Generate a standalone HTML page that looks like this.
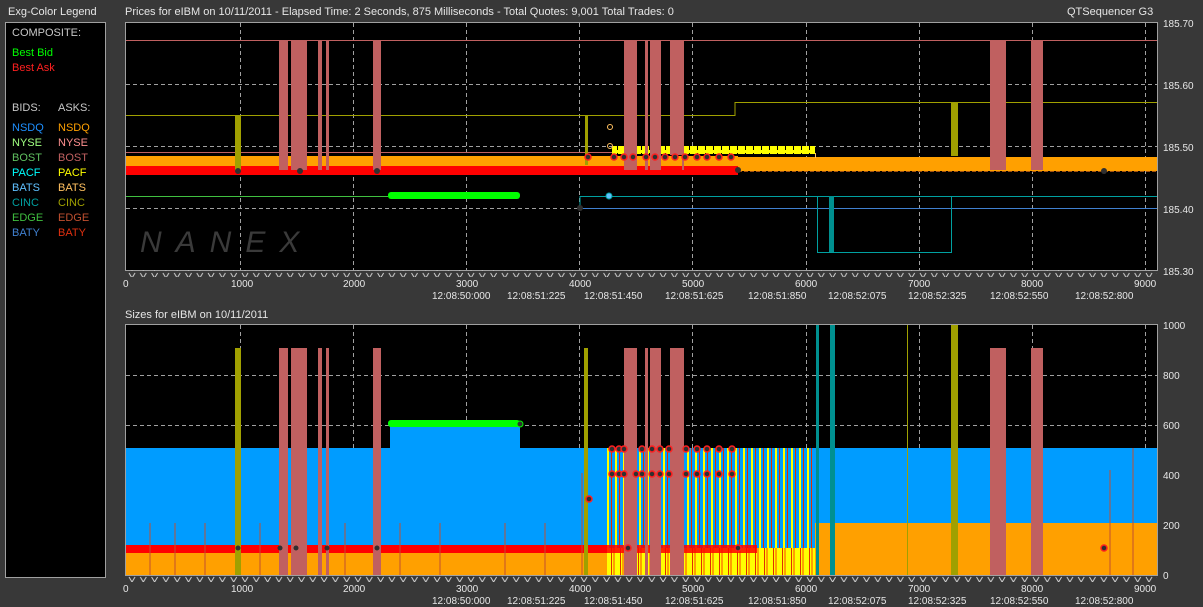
<!DOCTYPE html>
<html><head><meta charset="utf-8"><style>
html,body{margin:0;padding:0;background:#383838;}
svg{display:block;font-family:"Liberation Sans",sans-serif;}
</style></head><body>
<svg width="1203" height="607" viewBox="0 0 1203 607" xmlns="http://www.w3.org/2000/svg" xml:space="preserve">
<defs>
<pattern id="st" x="607" y="0" width="8" height="10" patternUnits="userSpaceOnUse">
<rect width="8" height="10" fill="#009cff"/><rect x="0" width="2" height="10" fill="#ffff00"/><rect x="4" width="1" height="10" fill="#e03000"/>
</pattern>
<pattern id="st2" x="607" y="0" width="9" height="10" patternUnits="userSpaceOnUse">
<rect width="9" height="10" fill="#ffff00"/><rect x="4" width="1" height="10" fill="#e03000"/><rect x="6" width="2" height="10" fill="#ffa000"/>
</pattern>
<pattern id="tk" x="127" y="0" width="11.3" height="8" patternUnits="userSpaceOnUse">
<path d="M2 1 L5 6 L8 1" stroke="#d0d0d0" fill="none" stroke-width="1"/>
</pattern>
<pattern id="yb" x="612" y="0" width="8" height="8" patternUnits="userSpaceOnUse">
<rect width="8" height="8" fill="#ffff00"/><rect x="5" y="1" width="1" height="5" fill="#000"/>
</pattern>
</defs>
<rect width="1203" height="607" fill="#383838"/>
<g fill="#e6e6e6" font-size="11">
<text x="8" y="15">Exg-Color Legend</text>
<text x="125" y="15">Prices for  eIBM  on  10/11/2011  -  Elapsed Time: 2 Seconds, 875 Milliseconds  -  Total Quotes: 9,001  Total Trades: 0</text>
<text x="1067" y="15">QTSequencer G3</text>
<text x="125" y="318">Sizes for  eIBM  on  10/11/2011</text>
</g>
<rect x="5.5" y="22.5" width="100" height="555" fill="#000" stroke="#a0a0a0"/>
<g font-size="11">
<text x="12" y="36" fill="#c8c8c8">COMPOSITE:</text>
<text x="12" y="56" fill="#00ff00">Best Bid</text>
<text x="12" y="71" fill="#ff2020">Best Ask</text>
<text x="12" y="111" fill="#c8c8c8">BIDS:</text><text x="58" y="111" fill="#c8c8c8">ASKS:</text>
<text x="12" y="131" fill="#1e90ff">NSDQ</text><text x="58" y="131" fill="#ffa000">NSDQ</text>
<text x="12" y="146" fill="#a0ff80">NYSE</text><text x="58" y="146" fill="#ff9090">NYSE</text>
<text x="12" y="161" fill="#60c060">BOST</text><text x="58" y="161" fill="#c06060">BOST</text>
<text x="12" y="176" fill="#00ffff">PACF</text><text x="58" y="176" fill="#ffff00">PACF</text>
<text x="12" y="191" fill="#60c0ff">BATS</text><text x="58" y="191" fill="#ffc060">BATS</text>
<text x="12" y="206" fill="#00a0a0">CINC</text><text x="58" y="206" fill="#a0a000">CINC</text>
<text x="12" y="221" fill="#40c040">EDGE</text><text x="58" y="221" fill="#c05030">EDGE</text>
<text x="12" y="236" fill="#4080d0">BATY</text><text x="58" y="236" fill="#e03010">BATY</text>
</g>

<rect x="125.5" y="22.5" width="1032" height="248" fill="#000" stroke="#a0a0a0"/>
<g stroke="#a0a0a0" stroke-dasharray="4,3" stroke-width="1">
<line x1="240.5" y1="23" x2="240.5" y2="270"/><line x1="353.5" y1="23" x2="353.5" y2="270"/><line x1="466.5" y1="23" x2="466.5" y2="270"/><line x1="579.5" y1="23" x2="579.5" y2="270"/><line x1="692.5" y1="23" x2="692.5" y2="270"/><line x1="806.5" y1="23" x2="806.5" y2="270"/><line x1="919.5" y1="23" x2="919.5" y2="270"/><line x1="1032.5" y1="23" x2="1032.5" y2="270"/><line x1="1145.5" y1="23" x2="1145.5" y2="270"/>
<line x1="126" y1="84.5" x2="1157" y2="84.5"/><line x1="126" y1="146.5" x2="1157" y2="146.5"/><line x1="126" y1="208.5" x2="1157" y2="208.5"/>
</g>
<text x="140" y="252" font-size="30" fill="#3a3a3a" font-style="italic" letter-spacing="14">NANEX</text>
<line x1="126" y1="40.5" x2="1157" y2="40.5" stroke="#c06060"/>
<polyline points="126,115.5 735,115.5 735,102.5 1157,102.5" fill="none" stroke="#a0a000"/>
<line x1="126" y1="152.5" x2="740" y2="152.5" stroke="#c06060"/>
<rect x="126" y="156" width="612" height="10" fill="#ffa000"/>
<rect x="126" y="166" width="612" height="9" fill="#ff0000"/>
<rect x="738" y="157" width="419" height="14" fill="#ffa000"/>
<line x1="738" y1="171.5" x2="1157" y2="171.5" stroke="#a05010" stroke-dasharray="4,2"/>
<rect x="612" y="146" width="203" height="8" fill="url(#yb)"/>
<line x1="815.5" y1="153" x2="815.5" y2="158" stroke="#ffc060"/>
<line x1="126" y1="196.5" x2="388" y2="196.5" stroke="#40c040"/>
<rect x="388" y="192" width="132" height="7" rx="3" fill="#00ff00"/>
<polyline points="580,208.5 580,196.5 1157,196.5" fill="none" stroke="#00a0a0"/>
<line x1="580" y1="208.5" x2="1157" y2="208.5" stroke="#4080d0"/>
<rect x="817.5" y="196.5" width="134" height="56" fill="none" stroke="#00a0a0"/>
<rect x="829" y="196" width="5" height="56" fill="#009090"/>
<g fill="#c06060">
<rect x="279" y="40" width="9" height="130"/><rect x="291" y="40" width="16" height="130"/><rect x="318" y="40" width="4" height="130"/><rect x="326" y="40" width="3" height="130"/><rect x="373" y="40" width="8" height="130"/>
<rect x="624" y="40" width="13" height="130"/><rect x="645" y="40" width="3" height="130"/><rect x="650" y="40" width="11" height="130"/><rect x="670" y="40" width="12" height="115"/><rect x="682" y="40" width="2" height="130"/>
<rect x="990" y="40" width="16" height="130"/><rect x="1031" y="40" width="12" height="130"/>
</g>
<g fill="#a0a000"><rect x="235" y="116" width="6" height="55"/><rect x="585" y="115" width="3" height="50"/><rect x="951" y="103" width="7" height="53"/></g>
<g fill="#303030" stroke="#ff2020" stroke-width="1.5">
<circle cx="614" cy="157" r="3"/><circle cx="624" cy="157" r="3"/><circle cx="633" cy="157" r="3"/><circle cx="646" cy="157" r="3"/><circle cx="655" cy="157" r="3"/><circle cx="665" cy="157" r="3"/><circle cx="675" cy="157" r="3"/><circle cx="685" cy="157" r="3"/><circle cx="697" cy="157" r="3"/><circle cx="707" cy="157" r="3"/><circle cx="719" cy="157" r="3"/><circle cx="731" cy="157" r="3"/><circle cx="588" cy="157" r="3"/>
</g>
<g fill="#303030"><circle cx="238" cy="171" r="3"/><circle cx="1104" cy="171" r="3"/><circle cx="738" cy="170" r="3"/><circle cx="580" cy="208" r="3"/><circle cx="300" cy="171" r="3"/><circle cx="377" cy="171" r="3"/></g>
<circle cx="609" cy="196" r="3" fill="#60c0ff" stroke="#00a0a0"/>
<circle cx="610" cy="127" r="2.5" fill="none" stroke="#ffc060"/><circle cx="610" cy="146" r="2.5" fill="none" stroke="#ffc060"/>
<rect x="126" y="270" width="1031" height="7" fill="url(#tk)"/>
<g fill="#e6e6e6" font-size="10">
<text x="123" y="287">0</text><text x="231" y="287">1000</text><text x="343" y="287">2000</text><text x="456" y="287">3000</text><text x="569" y="287">4000</text><text x="682" y="287">5000</text><text x="795" y="287">6000</text><text x="908" y="287">7000</text><text x="1021" y="287">8000</text><text x="1134" y="287">9000</text>
<text x="432" y="299">12:08:50:000</text><text x="507" y="299">12:08:51:225</text><text x="584" y="299">12:08:51:450</text><text x="665" y="299">12:08:51:625</text><text x="748" y="299">12:08:51:850</text><text x="828" y="299">12:08:52:075</text><text x="908" y="299">12:08:52:325</text><text x="990" y="299">12:08:52:550</text><text x="1075" y="299">12:08:52:800</text>
</g>
<g fill="#e6e6e6" font-size="10">
<text x="1163" y="27">185.70</text><text x="1163" y="89">185.60</text><text x="1163" y="151">185.50</text><text x="1163" y="213">185.40</text><text x="1163" y="275">185.30</text>
<text x="1163" y="329">1000</text><text x="1163" y="379">800</text><text x="1163" y="429">600</text><text x="1163" y="479">400</text><text x="1163" y="529">200</text><text x="1163" y="579">0</text>
</g>

<rect x="125.5" y="324.5" width="1032" height="251" fill="#000" stroke="#a0a0a0"/>
<g stroke="#a0a0a0" stroke-dasharray="4,3" stroke-width="1">
<line x1="240.5" y1="325" x2="240.5" y2="448"/><line x1="353.5" y1="325" x2="353.5" y2="448"/><line x1="466.5" y1="325" x2="466.5" y2="425"/><line x1="579.5" y1="325" x2="579.5" y2="448"/><line x1="692.5" y1="325" x2="692.5" y2="448"/><line x1="806.5" y1="325" x2="806.5" y2="448"/><line x1="919.5" y1="325" x2="919.5" y2="448"/><line x1="1032.5" y1="325" x2="1032.5" y2="448"/><line x1="1145.5" y1="325" x2="1145.5" y2="448"/>
<line x1="126" y1="375.5" x2="1157" y2="375.5"/><line x1="126" y1="425.5" x2="1157" y2="425.5"/>
</g>
<rect x="126" y="448" width="1031" height="127" fill="#009cff"/>
<rect x="390" y="425" width="130" height="24" fill="#009cff"/>
<rect x="126" y="553" width="482" height="22" fill="#ffa000"/>
<rect x="126" y="545" width="482" height="8" fill="#ff0000"/>
<rect x="607" y="448" width="208" height="100" fill="url(#st)"/>
<rect x="607" y="548" width="208" height="27" fill="url(#st2)"/>
<rect x="607" y="545" width="150" height="8" fill="#ff0000" opacity="0.85"/>
<rect x="815" y="523" width="342" height="52" fill="#ffa000"/>
<rect x="388" y="420" width="132" height="7" rx="3" fill="#00ff00"/>
<g stroke="#c05030" stroke-width="1">
<line x1="150" y1="523" x2="150" y2="575"/><line x1="175" y1="523" x2="175" y2="575"/><line x1="205" y1="523" x2="205" y2="575"/><line x1="260" y1="523" x2="260" y2="575"/><line x1="345" y1="523" x2="345" y2="575"/><line x1="400" y1="523" x2="400" y2="575"/><line x1="440" y1="523" x2="440" y2="575"/><line x1="505" y1="523" x2="505" y2="575"/><line x1="545" y1="523" x2="545" y2="575"/><line x1="582" y1="473" x2="582" y2="575"/><line x1="1110" y1="470" x2="1110" y2="575"/><line x1="1133" y1="448" x2="1133" y2="575"/>
</g>
<g fill="#c06060">
<rect x="279" y="348" width="9" height="227"/><rect x="291" y="348" width="16" height="227"/><rect x="318" y="348" width="4" height="227"/><rect x="326" y="348" width="3" height="227"/><rect x="373" y="348" width="8" height="227"/>
<rect x="624" y="348" width="13" height="227"/><rect x="645" y="348" width="3" height="227"/><rect x="650" y="348" width="11" height="227"/><rect x="670" y="348" width="12" height="227"/><rect x="682" y="348" width="2" height="227"/>
<rect x="990" y="348" width="16" height="227"/><rect x="1031" y="348" width="12" height="227"/>
</g>
<g fill="#a0a000"><rect x="235" y="348" width="6" height="227"/><rect x="584" y="348" width="4" height="227"/><rect x="951" y="325" width="7" height="250"/><rect x="907" y="325" width="1" height="250"/></g>
<g fill="#009090"><rect x="816" y="325" width="3" height="250"/><rect x="830" y="325" width="5" height="250"/></g>
<g fill="#303030" stroke="#ff2020" stroke-width="1.5">
<circle cx="612" cy="449" r="3"/><circle cx="619" cy="449" r="3"/><circle cx="624" cy="449" r="3"/><circle cx="642" cy="449" r="3"/><circle cx="652" cy="449" r="3"/><circle cx="660" cy="449" r="3"/><circle cx="669" cy="449" r="3"/><circle cx="686" cy="449" r="3"/><circle cx="697" cy="449" r="3"/><circle cx="707" cy="449" r="3"/><circle cx="719" cy="449" r="3"/><circle cx="732" cy="449" r="3"/>
<circle cx="612" cy="474" r="3"/><circle cx="619" cy="474" r="3"/><circle cx="624" cy="474" r="3"/><circle cx="636" cy="474" r="3"/><circle cx="642" cy="474" r="3"/><circle cx="652" cy="474" r="3"/><circle cx="660" cy="474" r="3"/><circle cx="669" cy="474" r="3"/><circle cx="686" cy="474" r="3"/><circle cx="697" cy="474" r="3"/><circle cx="707" cy="474" r="3"/><circle cx="719" cy="474" r="3"/><circle cx="732" cy="474" r="3"/>
<circle cx="589" cy="499" r="3"/><circle cx="1104" cy="548" r="3"/><circle cx="738" cy="548" r="3"/><circle cx="628" cy="548" r="3"/>
</g>
<g fill="#303030"><circle cx="238" cy="548" r="2.5"/><circle cx="280" cy="548" r="2.5"/><circle cx="296" cy="548" r="2.5"/><circle cx="327" cy="548" r="2.5"/><circle cx="377" cy="548" r="2.5"/></g>
<circle cx="520" cy="424" r="3" fill="#303030" stroke="#00ff00"/>
<rect x="126" y="575" width="1031" height="7" fill="url(#tk)"/>
<g fill="#e6e6e6" font-size="10">
<text x="123" y="592">0</text><text x="231" y="592">1000</text><text x="343" y="592">2000</text><text x="456" y="592">3000</text><text x="569" y="592">4000</text><text x="682" y="592">5000</text><text x="795" y="592">6000</text><text x="908" y="592">7000</text><text x="1021" y="592">8000</text><text x="1134" y="592">9000</text>
<text x="432" y="604">12:08:50:000</text><text x="507" y="604">12:08:51:225</text><text x="584" y="604">12:08:51:450</text><text x="665" y="604">12:08:51:625</text><text x="748" y="604">12:08:51:850</text><text x="828" y="604">12:08:52:075</text><text x="908" y="604">12:08:52:325</text><text x="990" y="604">12:08:52:550</text><text x="1075" y="604">12:08:52:800</text>
</g>
</svg>
</body></html>
